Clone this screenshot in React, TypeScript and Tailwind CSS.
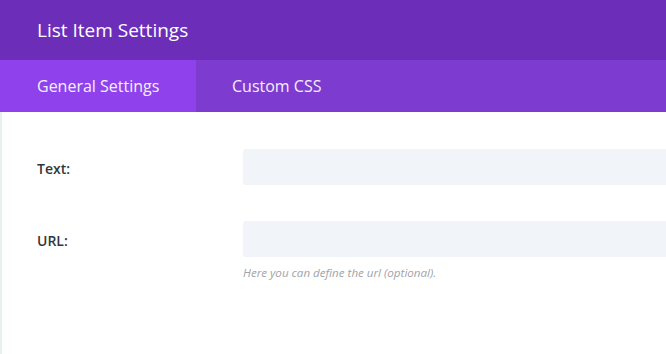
const fields = [
  { label: 'Text:', help: null },
  { label: 'URL:', help: 'Here you can define the url (optional).' },
];

const App = () => {
  return (
    <div className="h-[354px] w-[666px] overflow-hidden bg-white font-['Open_Sans',sans-serif]">
      <div className="flex h-[60px] items-center bg-[#6c2eb9] pl-[37px] text-[19px] text-white">
        List Item Settings
      </div>

      <div className="flex h-[52px] bg-[#7e3bd0] text-[16px] font-medium text-[#f5eefe]">
        <div className="flex w-[196px] items-center bg-[#8f42ec] pl-[37px]">
          General Settings
        </div>
        <div className="flex items-center pl-[36px]">Custom CSS</div>
      </div>

      <div className="h-[242px] border-l-2 border-[#e8f1f2] pt-[37px]">
        {fields.map((field) => (
          <div key={field.label} className="mb-[36px] flex">
            <div className="w-[241px] pl-[35px] pt-[9px] text-[14px] font-semibold text-[#32373c]">
              {field.label}
            </div>
            <div className="flex-1">
              <div className="h-[36px] rounded-l-[3px] bg-[#f1f4f8]" />
              <p className={field.help ? 'mt-[7px] text-[11.6px] italic text-[#a0a4a8]' : 'hidden'}>
                {field.help}
              </p>
            </div>
          </div>
        ))}
      </div>
    </div>
  );
};

export default App;
